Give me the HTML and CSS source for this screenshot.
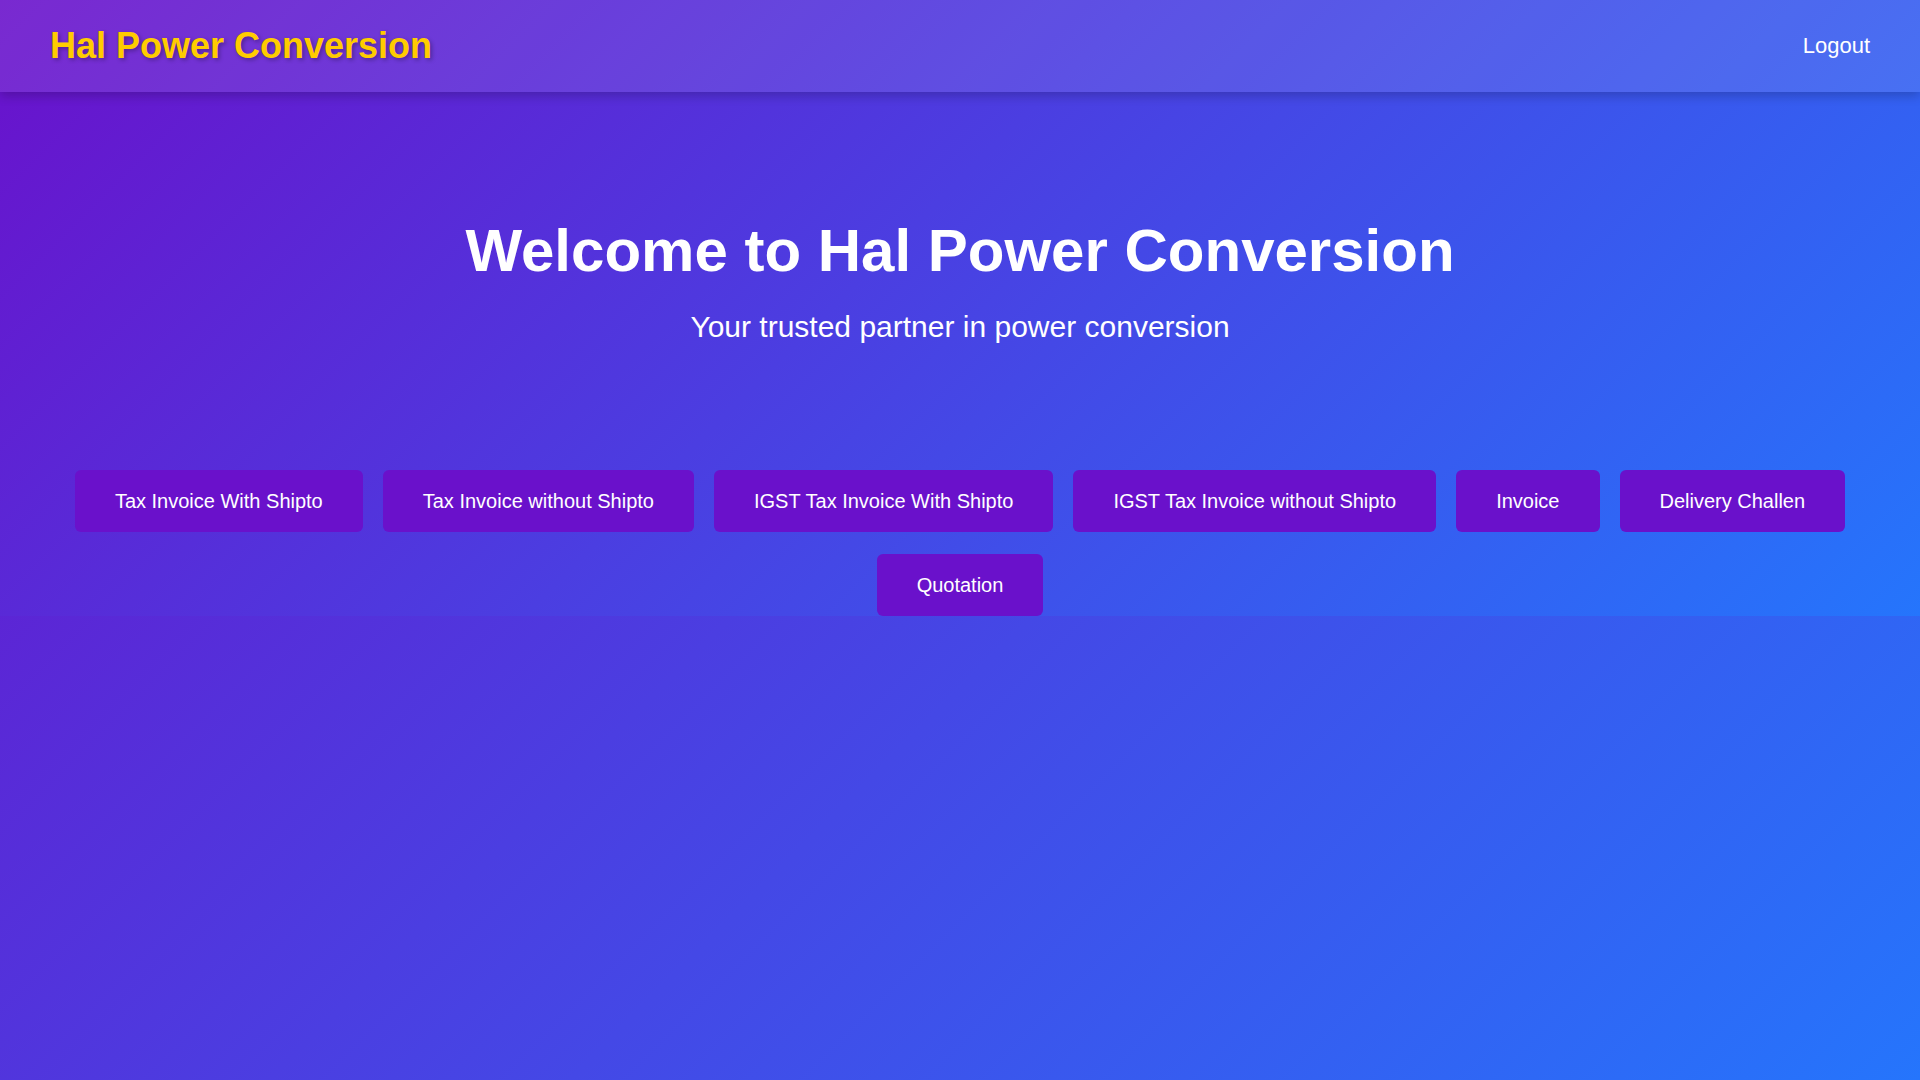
FILE: index.html
```html
<!DOCTYPE html>
<html lang="en">
<head>
<meta charset="UTF-8">
<title>Hal Power Conversion</title>
<link rel="stylesheet" href="styles.css">
</head>
<body>
<div class="app">
  <header class="topbar">
    <div class="brand">Hal Power Conversion</div>
    <a class="logout" href="#">Logout</a>
  </header>
  <section class="hero">
    <h1 class="hero-title">Welcome to Hal Power Conversion</h1>
    <p class="hero-sub">Your trusted partner in power conversion</p>
  </section>
  <nav class="actions">
    <button class="btn">Tax Invoice With Shipto</button>
    <button class="btn">Tax Invoice without Shipto</button>
    <button class="btn">IGST Tax Invoice With Shipto</button>
    <button class="btn">IGST Tax Invoice without Shipto</button>
    <button class="btn">Invoice</button>
    <button class="btn">Delivery Challen</button>
    <button class="btn">Quotation</button>
  </nav>
</div>
</body>
</html>
```
FILE: styles.css
```css
html, body {
  margin: 0;
  padding: 0;
}
body {
  min-height: 100vh;
  background: linear-gradient(135deg, #6a11cb, #2575fc);
  font-family: "Liberation Sans", Arial, sans-serif;
  color: #fff;
}
.app {
  background: linear-gradient(135deg, #6a11cb, #2575fc);
}
.topbar {
  height: 92px;
  box-sizing: border-box;
  padding: 0 50px;
  display: flex;
  align-items: center;
  justify-content: space-between;
  background: rgba(255, 255, 255, 0.1);
  box-shadow: 0 4px 10px rgba(0, 0, 0, 0.2);
}
.brand {
  font-size: 36px;
  font-weight: bold;
  color: #ffcc00;
  text-shadow: 2px 2px 4px rgba(0, 0, 0, 0.3);
}
.logout {
  color: #fff;
  text-decoration: none;
  font-size: 22px;
}
.hero {
  text-align: center;
  padding-top: 124px;
}
.hero-title {
  margin: 0;
  font-size: 60px;
  font-weight: bold;
}
.hero-sub {
  margin: 25px 0 0;
  font-size: 30px;
}
.actions {
  display: flex;
  flex-wrap: wrap;
  justify-content: center;
  gap: 22px 20px;
  padding: 126px 60px 0;
}
.btn {
  font-family: "Liberation Sans", Arial, sans-serif;
  font-size: 20px;
  color: #fff;
  background: #6a11cb;
  border: none;
  border-radius: 6px;
  padding: 19px 40px;
  line-height: 24px;
  cursor: pointer;
}
```
